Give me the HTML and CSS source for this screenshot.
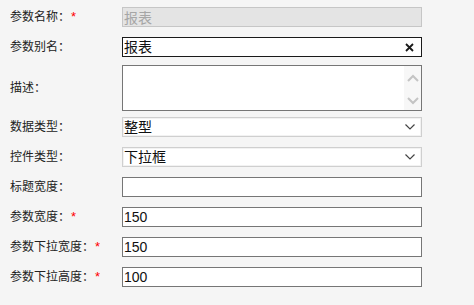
FILE: index.html
```html
<!DOCTYPE html>
<html lang="zh-CN">
<head>
    <meta charset="UTF-8">
    <title>参数设置</title>
    <link rel="stylesheet" href="styles.css">
</head>
<body>
    <div class="form">
        <div class="row">
            <label class="label">参数名称：<span class="req">*</span></label>
            <input class="field disabled" type="text" value="报表" disabled>
        </div>
        <div class="row">
            <label class="label">参数别名：</label>
            <div class="field focused">
                <span class="value">报表</span>
                <svg class="clear" width="9" height="9" viewBox="0 0 9 9"><path d="M1 1L8 8M8 1L1 8" stroke="#1a1a1a" stroke-width="1.8"/></svg>
            </div>
        </div>
        <div class="row row-tall">
            <label class="label">描述：</label>
            <div class="area">
                <textarea class="area-text"></textarea>
                <div class="scroll">
                    <svg width="12" height="8" viewBox="0 0 12 8"><path d="M1 7L6 2L11 7" fill="none" stroke="#c4c4c4" stroke-width="2"/></svg>
                    <svg width="12" height="8" viewBox="0 0 12 8"><path d="M1 1L6 6L11 1" fill="none" stroke="#c4c4c4" stroke-width="2"/></svg>
                </div>
            </div>
        </div>
        <div class="row">
            <label class="label">数据类型：</label>
            <div class="field select">
                <span class="value">整型</span>
                <svg width="10" height="6" viewBox="0 0 10 6"><path d="M0.5 0.5L5 5L9.5 0.5" fill="none" stroke="#444" stroke-width="1.2"/></svg>
            </div>
        </div>
        <div class="row">
            <label class="label">控件类型：</label>
            <div class="field select">
                <span class="value">下拉框</span>
                <svg width="10" height="6" viewBox="0 0 10 6"><path d="M0.5 0.5L5 5L9.5 0.5" fill="none" stroke="#444" stroke-width="1.2"/></svg>
            </div>
        </div>
        <div class="row">
            <label class="label">标题宽度：</label>
            <input class="field" type="text" value="">
        </div>
        <div class="row">
            <label class="label">参数宽度：<span class="req">*</span></label>
            <input class="field" type="text" value="150">
        </div>
        <div class="row">
            <label class="label">参数下拉宽度：<span class="req">*</span></label>
            <input class="field" type="text" value="150">
        </div>
        <div class="row">
            <label class="label">参数下拉高度：<span class="req">*</span></label>
            <input class="field" type="text" value="100">
        </div>
    </div>
</body>
</html>
```

FILE: styles.css
```css
body {
    margin: 0;
    background-color: #f5f5f5;
    font-family: 'Liberation Sans', 'Noto Sans CJK SC', sans-serif;
    color: #222222;
}
.form {
    display: flex;
    flex-direction: column;
    gap: 10px;
    padding: 7px 0 0 10px;
}
.row {
    display: flex;
    align-items: center;
}
.row-tall {
    margin: -2px 0 -4px;
}
.label {
    width: 112px;
    font-size: 12px;
    line-height: 16px;
    color: #222222;
}
.req {
    color: #ff0000;
    font-size: 13px;
    margin-left: 1px;
}
.field {
    box-sizing: border-box;
    width: 300px;
    height: 20px;
    margin: 0;
    padding: 0 1px;
    border: 1px solid #767676;
    background-color: #ffffff;
    font-family: 'Liberation Sans', 'Noto Sans CJK SC', sans-serif;
    font-size: 14px;
    color: #111111;
    outline: none;
    display: flex;
    align-items: center;
}
.disabled {
    background-color: #e4e4e4;
    border-color: #c6c6c6;
    color: #a6a6a6;
}
.focused {
    border-color: #1a1a1a;
}
.value {
    flex: 1;
    line-height: 18px;
}
.clear {
    margin-right: 6px;
}
.area {
    box-sizing: border-box;
    width: 300px;
    height: 46px;
    border: 1px solid #767676;
    background-color: #ffffff;
    display: flex;
}
.area-text {
    flex: 1;
    border: none;
    outline: none;
    resize: none;
    margin: 0;
    padding: 0;
    overflow: hidden;
}
.scroll {
    width: 17px;
    background-color: #f7f7f7;
    display: flex;
    flex-direction: column;
    justify-content: space-between;
    align-items: center;
    padding: 8px 0 5px;
}
.select {
    border-color: #cfcfcf;
    box-shadow: inset 0 0 0 1px #f2f2f2;
    padding-right: 6px;
}
```
